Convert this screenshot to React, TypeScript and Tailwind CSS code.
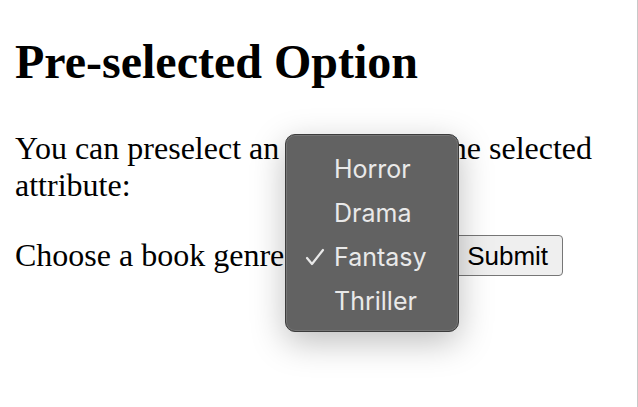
import React from 'react';

const genres = ['Horror', 'Drama', 'Fantasy', 'Thriller'];

const SelectPopup: React.FC<{ selected: string }> = ({ selected }) => (
  <div className="absolute left-[270px] top-[-101px] w-[174px] h-[198px] rounded-[10px] border border-[#3c3c3c] bg-[#626262] pt-[12px] shadow-[0_10px_34px_rgba(0,0,0,0.26),inset_0_0_0_1px_rgba(255,255,255,0.12)] font-['Inter',sans-serif]">
    {genres.map((g) => (
      <div key={g} className="relative flex h-[44px] items-center pl-[48px] text-[25px] text-[#e9e9e9]">
        {g === selected && (
          <svg
            className="absolute left-[19px] top-[13px] h-[18px] w-[20px]"
            viewBox="0 0 20 18"
            fill="none"
            stroke="#e9e9e9"
            strokeWidth="2.2"
            strokeLinecap="round"
            strokeLinejoin="round"
          >
            <path d="M2 10 L7 16 L18 2" />
          </svg>
        )}
        {g}
      </div>
    ))}
  </div>
);

export default function App() {
  return (
    <div className="min-h-[407px] border-r border-[#c8c8c8] bg-white px-[15px] text-black font-['Liberation_Serif',serif]">
      <h1 className="pt-[34px] text-[48px] font-bold leading-[55px]">Pre-selected Option</h1>
      <p className="mt-[41px] text-[32px] leading-[37px]">
        You can preselect an option with the selected attribute:
      </p>
      <form className="relative mt-[31px] flex items-center text-[32px] leading-[37px]">
        <label>Choose a book genre:</label>
        <div className="ml-[8px] h-[37px] w-[147px]" />
        <button
          type="button"
          className="ml-[4px] h-[41px] rounded-[4px] border border-[#767676] bg-[#efefef] px-[14px] text-[26px] leading-[30px] font-['Liberation_Sans',sans-serif]"
        >
          Submit
        </button>
        <SelectPopup selected="Fantasy" />
      </form>
    </div>
  );
}
